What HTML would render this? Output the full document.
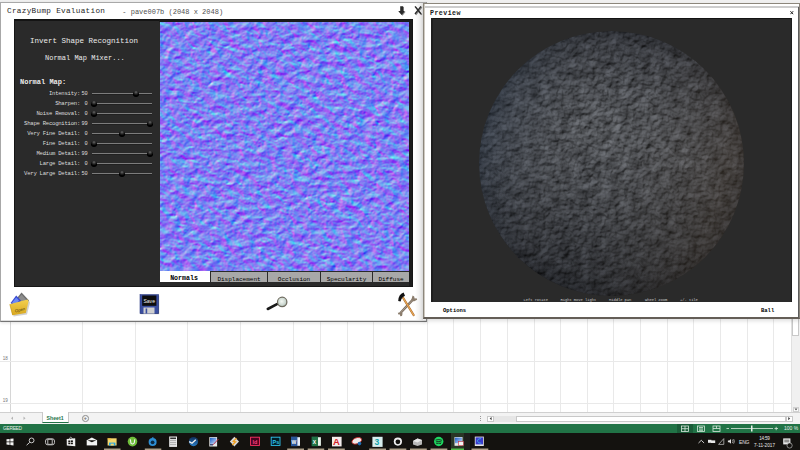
<!DOCTYPE html>
<html><head><meta charset="utf-8"><style>
*{margin:0;padding:0;box-sizing:border-box}
html,body{width:800px;height:450px;overflow:hidden;background:#fff;font-family:"Liberation Sans",sans-serif}
div{position:absolute}
.t{white-space:nowrap;line-height:1}
.mono{font-family:"Liberation Mono",monospace}
.vl{top:0;width:1px;height:413px;background:#e9e9e9}
.hl{left:0;height:1px;width:791px;background:#e9e9e9}
.lb{font-family:"Liberation Mono",monospace;font-size:5.6px;letter-spacing:-0.25px;color:#dcdcdc;white-space:nowrap;line-height:1;text-align:right;width:80px;left:0px}
.vv{font-family:"Liberation Mono",monospace;font-size:5.4px;letter-spacing:-0.2px;color:#dcdcdc;white-space:nowrap;line-height:1;text-align:right;width:20px;left:67.5px}
.tr{left:92px;width:60px;height:1px;background:#7c7c7c;box-shadow:0 1px 0 #202020}
.kn{width:5.4px;height:5.4px;border-radius:50%;background:radial-gradient(circle at 50% 20%,#666 0,#222 35%,#000 60%)}
#nmap{left:160px;top:22px;width:249px;height:249px;overflow:hidden}
#pdark{left:431px;top:18px;width:361px;height:284px;background:#2a2a2a;border-top:1px solid #141414;overflow:hidden}
.tab{top:272px;height:10px;background:#a8a8a8;font-family:"Liberation Mono",monospace;font-size:6px;line-height:10px;text-align:center;color:#000;white-space:nowrap;padding-top:3px}
</style></head><body>
<!-- excel -->
<div style="left:0;top:0;width:800px;height:413px;background:#fff">
<div class="vl" style="left:82px"></div><div class="vl" style="left:135px"></div><div class="vl" style="left:187px"></div><div class="vl" style="left:240px"></div><div class="vl" style="left:293px"></div><div class="vl" style="left:320px"></div><div class="vl" style="left:347px"></div><div class="vl" style="left:373px"></div><div class="vl" style="left:400px"></div><div class="vl" style="left:427px"></div><div class="vl" style="left:453px"></div><div class="vl" style="left:480px"></div><div class="vl" style="left:507px"></div><div class="vl" style="left:534px"></div><div class="vl" style="left:560px"></div><div class="vl" style="left:587px"></div><div class="vl" style="left:613px"></div><div class="vl" style="left:640px"></div><div class="vl" style="left:667px"></div><div class="vl" style="left:693px"></div><div class="vl" style="left:720px"></div><div class="vl" style="left:747px"></div><div class="vl" style="left:773px"></div><div class="vl" style="left:10px;background:#d6d6d6"></div><div class="hl" style="top:361px"></div><div class="hl" style="top:403px"></div>
<div style="left:0;top:0;width:800px;height:3px;background:#f0f0f0"></div>
<div class="t" style="left:2.8px;top:356.6px;font-size:4.6px;color:#777">18</div>
<div class="t" style="left:2.8px;top:398.6px;font-size:4.6px;color:#777">19</div>
<div style="left:791px;top:3px;width:9px;height:410px;background:#f0f0f0;border-left:1px solid #e0e0e0"></div>
<div style="left:792px;top:300px;width:7px;height:36px;background:#fff;border:1px solid #c8c8c8"></div>
<div style="left:793px;top:407px;width:6px;height:5px;background:#fff;border:1px solid #d0d0d0"></div>
</div>

<!-- main window -->
<div style="left:0;top:2px;width:427px;height:320px;background:#fff;border:1px solid #a8a8a8;border-bottom:1px solid #747474;border-right:1px solid #8a8a8a;box-shadow:0 1px 3px rgba(0,0,0,0.12)"></div>
<div style="left:1px;top:320px;width:425px;height:1px;background:#dedede"></div>
<div style="left:415px;top:3px;width:8px;height:317px;background:linear-gradient(90deg,rgba(0,0,0,0),rgba(0,0,0,0.1))"></div>
<div class="t mono" style="left:7px;top:8px;font-size:7.7px;letter-spacing:0.3px;color:#1e1e1e">CrazyBump Evaluation</div>
<div class="t mono" style="left:122.3px;top:8.5px;font-size:7px;color:#505050">- pave007b (2048 x 2048)</div>
<div style="left:14px;top:19px;width:399px;height:268px;background:#2a2a2a;border:1px solid #161616;border-top:2px solid #141414"></div>
<div style="left:409px;top:20px;width:3px;height:266px;background:#1c1c1c"></div>
<div style="left:159px;top:20px;width:251px;height:2px;background:#1a1a1a"></div>
<div id="nmap"><svg width="249" height="249" style="display:block">
<defs><filter id="nm" x="0" y="0" width="249" height="249" filterUnits="userSpaceOnUse" color-interpolation-filters="sRGB">
  <feTurbulence type="fractalNoise" baseFrequency="0.11 0.14" numOctaves="4" seed="7" result="t1"/>
  <feTurbulence type="turbulence" baseFrequency="0.06 0.08" numOctaves="3" seed="3" result="t2"/>
  <feComposite in="t1" in2="t2" operator="arithmetic" k1="0" k2="0.5" k3="0.6" k4="0" result="t"/>
  <feColorMatrix in="t" type="matrix" values="1 0 0 0 0  1 0 0 0 0  1 0 0 0 0  0 0 0 0 1" result="h"/>
  <feConvolveMatrix in="h" order="3" kernelMatrix="-1 0 1 -2 0 2 -1 0 1" divisor="2.7" bias="0.5" preserveAlpha="true" result="gx"/>
  <feConvolveMatrix in="h" order="3" kernelMatrix="-1 -2 -1 0 0 0 1 2 1" divisor="2.7" bias="0.5" preserveAlpha="true" result="gy"/>
  <feColorMatrix in="gx" type="matrix" values="1 0 0 0 0  0 0 0 0 0  0 0 0 0 0  0 0 0 0 1" result="r"/>
  <feColorMatrix in="gy" type="matrix" values="0 0 0 0 0  1 0 0 0 0  0 0 0 0 0  0 0 0 0 1" result="g"/>
  <feComposite in="r" in2="g" operator="arithmetic" k1="0" k2="1" k3="1" k4="0" result="rg"/>
  <feColorMatrix in="rg" type="matrix" values="1 0 0 0 0.0  0 1 0 0 0.0  0 0 0 0 0.95  0 0 0 0 1"/>
</filter></defs>
<rect x="0" y="0" width="249" height="249" filter="url(#nm)"/>
</svg></div>

<div class="t mono" style="left:30px;top:38px;font-size:7.5px;color:#eaeaea">Invert Shape Recognition</div>
<div class="t mono" style="left:45px;top:54.8px;font-size:7px;color:#eaeaea">Normal Map Mixer...</div>
<div class="t mono" style="left:20px;top:79px;font-size:7px;font-weight:bold;color:#eaeaea">Normal Map:</div>
<div class="lb" style="top:91.4px">Intensity:</div><div class="vv" style="top:91.5px">50</div><div class="tr" style="top:93px"></div><div class="kn" style="left:133.3px;top:91.3px"></div>
<div class="lb" style="top:101.4px">Sharpen:</div><div class="vv" style="top:101.5px">0</div><div class="tr" style="top:103px"></div><div class="kn" style="left:91.3px;top:101.3px"></div>
<div class="lb" style="top:111.4px">Noise Removal:</div><div class="vv" style="top:111.5px">0</div><div class="tr" style="top:113px"></div><div class="kn" style="left:91.3px;top:111.3px"></div>
<div class="lb" style="top:121.4px">Shape Recognition:</div><div class="vv" style="top:121.5px">99</div><div class="tr" style="top:123px"></div><div class="kn" style="left:147.3px;top:121.3px"></div>
<div class="lb" style="top:131.4px">Very Fine Detail:</div><div class="vv" style="top:131.5px">0</div><div class="tr" style="top:133px"></div><div class="kn" style="left:119.3px;top:131.3px"></div>
<div class="lb" style="top:141.4px">Fine Detail:</div><div class="vv" style="top:141.5px">0</div><div class="tr" style="top:143px"></div><div class="kn" style="left:91.3px;top:141.3px"></div>
<div class="lb" style="top:151.4px">Medium Detail:</div><div class="vv" style="top:151.5px">99</div><div class="tr" style="top:153px"></div><div class="kn" style="left:147.3px;top:151.3px"></div>
<div class="lb" style="top:161.4px">Large Detail:</div><div class="vv" style="top:161.5px">0</div><div class="tr" style="top:163px"></div><div class="kn" style="left:91.3px;top:161.3px"></div>
<div class="lb" style="top:171.4px">Very Large Detail:</div><div class="vv" style="top:171.5px">50</div><div class="tr" style="top:173px"></div><div class="kn" style="left:119.3px;top:171.3px"></div>

<div class="tab" style="left:160px;top:271px;width:50px;height:11px;background:#fff;padding-top:3px;padding-right:2px;color:#000;font-size:6.6px;font-weight:bold;letter-spacing:0px">Normals</div>
<div class="tab" style="left:211px;width:56px">Displacement</div>
<div class="tab" style="left:268px;width:52px">Occlusion</div>
<div class="tab" style="left:321px;width:51px">Specularity</div>
<div class="tab" style="left:373px;width:36px">Diffuse</div>

<!-- preview -->
<div style="left:423px;top:3px;width:377px;height:316px;background:#fff;border:1px solid #8c877c;border-bottom:2px solid #645e57;border-right:1px solid #8a857c;box-shadow:0 2px 4px rgba(0,0,0,0.13)"></div>
<div style="left:424px;top:6px;width:375px;height:1.5px;background:#cdcdcd"></div>
<div style="left:424px;top:4px;width:1px;height:313px;background:#cfcac2"></div>
<div class="t mono" style="left:430px;top:11px;font-size:6.6px;font-weight:bold;color:#222;letter-spacing:0.45px">Preview</div>
<svg style="position:absolute;left:0;top:0" width="800" height="40"><g filter="url(#blur03)"><path d="M790.4 11.2 L793.2 14.2 M793.2 11.2 L790.4 14.2" stroke="#222" stroke-width="1"/></g></svg>
<div id="pdark"><svg width="361" height="284" style="display:block">
<defs>
<radialGradient id="sg" cx="0.5" cy="0.5" r="0.5" fx="0.47" fy="0.36">
  <stop offset="0" stop-color="#6a6d72"/>
  <stop offset="0.5" stop-color="#5c5f65"/>
  <stop offset="0.88" stop-color="#4a4d54"/>
  <stop offset="1" stop-color="#3a3d44"/>
</radialGradient>
<linearGradient id="tint" x1="0" y1="0" x2="1" y2="0.3">
  <stop offset="0" stop-color="#5078a8" stop-opacity="0.2"/>
  <stop offset="0.5" stop-color="#808080" stop-opacity="0"/>
  <stop offset="1" stop-color="#a07848" stop-opacity="0.14"/>
</linearGradient>
<linearGradient id="bot" x1="0" y1="0" x2="0" y2="1">
  <stop offset="0.45" stop-color="#000" stop-opacity="0"/>
  <stop offset="1" stop-color="#000" stop-opacity="0.22"/>
</linearGradient>
<filter id="st" x="0" y="0" width="100%" height="100%" color-interpolation-filters="sRGB">
  <feTurbulence type="fractalNoise" baseFrequency="0.22" numOctaves="3" seed="12" result="t"/>
  <feColorMatrix in="t" type="matrix" values="0 0 0 0 0  0 0 0 0 0  0 0 0 0 0  1.5 0 0 0 -0.22" result="ta"/>
  <feDiffuseLighting in="ta" surfaceScale="1.5" diffuseConstant="0.9" lighting-color="#fff" result="l">
    <feDistantLight azimuth="240" elevation="55"/>
  </feDiffuseLighting>
  <feTurbulence type="fractalNoise" baseFrequency="0.1" numOctaves="2" seed="4" result="t2"/>
  <feColorMatrix in="t2" type="matrix" values="1.6 0 0 0 -0.3  1.6 0 0 0 -0.3  1.6 0 0 0 -0.3  0 0 0 0 1" result="hg"/>
  <feComposite in="l" in2="hg" operator="arithmetic" k1="0" k2="0.72" k3="0.4" k4="0" result="lh"/>
  <feComposite in="lh" in2="SourceGraphic" operator="arithmetic" k1="1.1" k2="0" k3="0" k4="0" result="m"/>
  <feComposite in="m" in2="SourceGraphic" operator="in"/>
</filter>
</defs>
<circle cx="180.5" cy="144.5" r="132.5" fill="url(#sg)" filter="url(#st)"/>
<circle cx="180.5" cy="144.5" r="132.5" fill="url(#tint)"/>
<circle cx="180.5" cy="144.5" r="132.5" fill="url(#bot)"/>
</svg></div>

<div style="left:431px;top:18px;width:2px;height:284px;background:#1e1e1e"></div>
<div style="left:790.5px;top:18px;width:1px;height:284px;background:#1e1e1e"></div>
<div style="left:798px;top:7px;width:1px;height:311px;background:#5c5c5c"></div>
<div class="t mono" style="left:443px;top:307.8px;font-size:5.5px;color:#000;font-weight:bold">Options</div>
<div class="t mono" style="left:761px;top:307.6px;font-size:5.5px;color:#000;font-weight:bold">Ball</div>


<svg style="position:absolute;left:0;top:0" width="800" height="450">
<defs>
<linearGradient id="fold" x1="0" y1="0" x2="0" y2="1"><stop offset="0" stop-color="#f4d050"/><stop offset="1" stop-color="#d8a820"/></linearGradient>
<radialGradient id="lens" cx="0.45" cy="0.45" r="0.6"><stop offset="0" stop-color="#f4f8f4"/><stop offset="0.7" stop-color="#c8d4cc"/><stop offset="1" stop-color="#8a948c"/></radialGradient>
<filter id="blur03"><feGaussianBlur stdDeviation="0.35"/></filter>
<filter id="sh"><feGaussianBlur stdDeviation="0.6"/></filter>
</defs>
<!-- title bar icons -->
<g filter="url(#sh)" opacity="0.45" transform="translate(0.8 0.8)">
<path d="M400.2 6.2 L403.2 6.2 L403.2 11 L404.9 11 L401.7 15 L398.2 11 L400.2 11Z" fill="#000"/>
<path d="M415 6.3 L421 14 M421 6.3 L415 14" stroke="#000" stroke-width="1.3"/>
</g>
<g filter="url(#blur03)">
<path d="M400.2 6.2 L403.2 6.2 L403.2 11 L404.9 11 L401.7 15 L398.2 11 L400.2 11Z" fill="#2a2a2a"/>
<path d="M415 6.3 L421 14 M421 6.3 L415 14" stroke="#2a2a2a" stroke-width="1.3"/>
</g>
<!-- open folder -->
<g>
<path d="M15.5 300 L21.5 292.6 L29 300.5 L23 306.5Z" fill="#6e6e6e"/>
<path d="M17 300 L21.6 294.6 L27 300.4 L22.6 304.6Z" fill="#9a9a9a" opacity="0.7"/>
<path d="M10.6 303 L16.2 295.6 L21 300.5 L15.5 307.5Z" fill="#3a4ad0"/>
<path d="M12 302.8 L16.2 297.6 L19 300.6 L15.2 305.2Z" fill="#6a8af8"/>
<path d="M10 304.5 L28 299.8 L29 301.6 L26 313.4 L12.6 315.6 L10.4 307Z" fill="#000" opacity="0.18" transform="translate(1 1)"/>
<path d="M9.6 304.2 L27.6 299.4 L28.6 301.2 L25.8 313 L12.4 315.2 L10.2 306.5Z" fill="url(#fold)"/>
<path d="M9.8 304.4 L12.6 315" stroke="#c09010" stroke-width="0.5"/>
<text x="14.5" y="311.5" font-family="Liberation Sans" font-size="4.2" font-style="italic" fill="#4a3608" transform="rotate(-15 19 309)">Open</text>
</g>
<!-- save floppy -->
<rect x="140.6" y="295.5" width="18.5" height="18.6" fill="#141414" filter="url(#sh)" opacity="0.5"/>
<rect x="140" y="294.6" width="18.6" height="19" fill="#3a4ea0"/>
<rect x="140" y="294.6" width="18.6" height="19" fill="none" stroke="#2a3a80" stroke-width="0.6"/>
<rect x="142.2" y="295.5" width="14.2" height="10.3" fill="#0c0c0c"/>
<text x="143.4" y="302.8" font-family="Liberation Sans" font-size="5.4" fill="#f0f0f0" textLength="11.6" lengthAdjust="spacingAndGlyphs">Save</text>
<rect x="143.5" y="307.5" width="11" height="6.1" fill="#cfcfcf"/>
<rect x="145.6" y="308.5" width="1.6" height="5" fill="#3a4ea0"/>
<!-- magnifier -->
<line x1="267.8" y1="309" x2="277" y2="304.2" stroke="#1a1a1a" stroke-width="2.6" stroke-linecap="round"/>
<circle cx="282.2" cy="301.9" r="4.7" fill="url(#lens)" stroke="#6e6a5e" stroke-width="1.2"/>
<!-- tools -->
<path d="M400.2 313.2 L413.8 298.6" stroke="#7a6c5e" stroke-width="2.4"/>
<path d="M400.2 313.2 L413.8 298.6" stroke="#b0a494" stroke-width="0.9"/>
<path d="M411.4 299.6 L412.6 295.6 L414.2 296.6 L414.6 298.4 L416.6 298.2 L417.2 299.8 L413.8 301.4Z" fill="#8a7c6c"/>
<path d="M401.6 312.4 L397.8 312.8 L398.4 314.6 L400 314.6 L400.2 316.2 L402 316 L402.6 313.6Z" fill="#8a7c6c"/>
<line x1="403.2" y1="298" x2="413.6" y2="315" stroke="#a86a2a" stroke-width="2.2" stroke-linecap="round"/>
<line x1="403.2" y1="298" x2="413.6" y2="315" stroke="#eaa858" stroke-width="1.2" stroke-linecap="round"/>
<path d="M398.2 301 Q398.4 294.6 403.6 292.6 L405 295.8 Q401.6 297.2 400.6 301.4Z" fill="#111"/>
<!-- excel vertical scroll arrow -->
<path d="M794.4 408.6 L797.6 408.6 L796 410.6Z" fill="#555"/>
</svg>
<div class="t mono" style="left:523.5px;top:299.2px;font-size:3.8px;color:#c8c8c8;letter-spacing:-0.05px">Left rotate</div>
<div class="t mono" style="left:560.5px;top:299.2px;font-size:3.8px;color:#c8c8c8;letter-spacing:-0.05px">Right move light</div>
<div class="t mono" style="left:609px;top:299.2px;font-size:3.8px;color:#c8c8c8;letter-spacing:-0.05px">Middle pan</div>
<div class="t mono" style="left:645px;top:299.2px;font-size:3.8px;color:#c8c8c8;letter-spacing:-0.05px">Wheel zoom</div>
<div class="t mono" style="left:680px;top:299.2px;font-size:3.8px;color:#c8c8c8;letter-spacing:-0.05px">+/- tile</div>

<!-- excel bottom -->
<div style="left:0;top:412px;width:800px;height:12px;background:#f3f3f3;border-top:1px solid #d0d0d0"></div>

<div style="left:41.5px;top:412px;width:27.5px;height:11.2px;background:#fff;border-left:1px solid #c8c8c8;border-right:1px solid #c8c8c8;border-bottom:1.4px solid #217346"></div>
<div class="t" style="left:46.6px;top:415.8px;font-size:5.2px;font-weight:bold;color:#217346">Sheet1</div>
<div style="left:82.2px;top:415px;width:6.6px;height:6.6px;border-radius:50%;border:1px solid #8a8a8a"></div>
<div class="t" style="left:83.4px;top:415.4px;font-size:6px;font-weight:bold;color:#777;line-height:1">+</div>
<div style="left:480px;top:416px;width:1px;height:1px;background:#999"></div>
<div style="left:480px;top:418px;width:1px;height:1px;background:#999"></div>
<div style="left:480px;top:420px;width:1px;height:1px;background:#999"></div>
<div style="left:487px;top:415.5px;width:298px;height:6px;background:#e6e6e6"></div>
<div style="left:487px;top:415.5px;width:7px;height:6px;background:#fff;border:1px solid #c8c8c8"></div>

<div style="left:516px;top:415.5px;width:270px;height:6px;background:#fff;border:1px solid #c8c8c8"></div>
<div style="left:785.5px;top:415.5px;width:7px;height:6px;background:#fff;border:1px solid #c8c8c8"></div>

<svg style="position:absolute;left:0;top:0" width="800" height="450">
<path d="M13 416.5 L11 418.3 L13 420.1Z" fill="#b4b4b4"/>
<path d="M23.5 416.5 L25.5 418.3 L23.5 420.1Z" fill="#b4b4b4"/>
<path d="M491.6 416.9 L489.6 418.6 L491.6 420.3Z" fill="#444"/>
<path d="M788.2 416.9 L790.2 418.6 L788.2 420.3Z" fill="#444"/>
</svg>
<div style="left:0;top:424px;width:800px;height:9px;background:#217346"></div>
<div class="t" style="left:3px;top:427px;font-size:4.8px;color:#e8f0ea;letter-spacing:-0.25px">GEREED</div>
<div style="left:677px;top:424px;width:16px;height:9px;background:#1a5c38"></div>
<svg style="position:absolute;left:0;top:0" width="800" height="450">
 <g stroke="#d8e8dc" stroke-width="0.8" fill="none">
  <rect x="681.5" y="426" width="7" height="5.5"/><line x1="681.5" y1="428.7" x2="688.5" y2="428.7"/><line x1="685" y1="426" x2="685" y2="431.5"/>
  <rect x="697.5" y="426" width="7" height="5.5"/><line x1="699" y1="427.5" x2="703" y2="427.5"/><line x1="699" y1="429" x2="703" y2="429"/><line x1="699" y1="430.3" x2="703" y2="430.3"/>
  <rect x="713" y="426" width="7" height="5.5"/><line x1="716.5" y1="426" x2="716.5" y2="428.5"/><line x1="713" y1="428.5" x2="720" y2="428.5"/>
  <line x1="726.5" y1="428.5" x2="729" y2="428.5"/>
  <line x1="731" y1="428.5" x2="773" y2="428.5"/>
  <line x1="774.5" y1="428.5" x2="778" y2="428.5"/><line x1="776.2" y1="426.8" x2="776.2" y2="430.2"/>
 </g>
 <rect x="751" y="425.5" width="1.5" height="6" fill="#e8f0ea"/>
</svg>
<div class="t" style="left:784px;top:426px;font-size:5px;color:#e8f0ea">100 %</div>
<svg style="position:absolute;left:0;top:0" width="800" height="450">
<rect x="0" y="433" width="800" height="17" fill="#14120f"/>
<!-- running indicators -->
<g fill="#c9b9a0" opacity="0.85">
<rect x="104" y="448.5" width="16.5" height="1.5"/>
<rect x="144.8" y="448.5" width="16.5" height="1.5"/>
<rect x="287.2" y="448.5" width="16.8" height="1.5"/>
<rect x="307.7" y="448.5" width="16.5" height="1.5"/>
<rect x="328" y="448.5" width="16.8" height="1.5"/>
<rect x="369.2" y="448.5" width="16.8" height="1.5"/>
<rect x="389.5" y="448.5" width="16.8" height="1.5"/>
<rect x="410" y="448.5" width="16.8" height="1.5"/>
<rect x="430.5" y="448.5" width="16.8" height="1.5"/>
<rect x="471.5" y="448.5" width="16.8" height="1.5"/>
</g>
<rect x="451" y="433" width="13" height="17" fill="#2a3626"/>
<rect x="464" y="433" width="6" height="17" fill="#1e1e1c"/>
<rect x="451" y="448.5" width="13" height="1.5" fill="#52c04a"/>
<!-- windows logo -->
<g fill="#f4f4f4">
<path d="M6.5 439.3 L9.6 438.9 L9.6 441.6 L6.5 441.6Z"/>
<path d="M10.3 438.8 L13.5 438.4 L13.5 441.6 L10.3 441.6Z"/>
<path d="M6.5 442.3 L9.6 442.3 L9.6 445 L6.5 444.6Z"/>
<path d="M10.3 442.3 L13.5 442.3 L13.5 445.5 L10.3 445.1Z"/>
</g>
<!-- search -->
<g stroke="#dcdcdc" stroke-width="0.9" fill="none">
<circle cx="31.6" cy="440.4" r="2.4"/>
<line x1="29.8" y1="442.3" x2="26.6" y2="445.2"/>
</g>
<!-- task view -->
<g stroke="#cfcfcf" stroke-width="0.9" fill="none">
<rect x="45.5" y="438.8" width="9" height="6" rx="2.2"/>
<rect x="47.8" y="439.3" width="4.4" height="5" fill="#14120f"/>
</g>
<!-- store -->
<path d="M66.7 439 L75.2 438.3 L75.3 446.3 L66.8 445.5Z" fill="#f0f0f0"/>
<path d="M69 438.8 Q70.5 435.8 72.5 438.5" stroke="#e0e0e0" stroke-width="0.8" fill="none"/>
<g fill="#14120f"><rect x="68.3" y="440.5" width="2" height="1.6"/><rect x="70.9" y="440.4" width="2" height="1.6"/><rect x="68.3" y="442.6" width="2" height="1.6"/><rect x="70.9" y="442.6" width="2" height="1.6"/></g>
<!-- mail -->
<rect x="86.7" y="440" width="10.4" height="5.4" fill="#f2f2f2"/>
<path d="M86.7 440.2 L91.9 437.4 L97.1 440.2Z" fill="#f2f2f2"/>
<path d="M87.5 440.2 L91.9 442.3 L96.4 440.2Z" fill="#14120f"/>
<!-- explorer -->
<rect x="107.6" y="438.3" width="9" height="7.2" fill="#f6d870"/>
<rect x="107.6" y="438.3" width="3.5" height="1.2" fill="#e8b83a"/>
<rect x="109" y="442.6" width="6.4" height="2.9" fill="#2aa6e0"/>
<rect x="110.6" y="443.6" width="3.2" height="1.9" fill="#f6d870"/>
<!-- utorrent -->
<circle cx="132.5" cy="441.6" r="4.8" fill="#6fbf3a"/>
<path d="M130.3 439.4 L131 443.4 Q132.8 444.8 134.2 443 L134.8 439.4" stroke="#f2f2f2" stroke-width="1.1" fill="none"/>
<!-- blue circle app -->
<circle cx="152.6" cy="442" r="4" fill="#2d8ed4"/>
<circle cx="152.6" cy="442.3" r="1.9" fill="#0c2a44"/>
<path d="M151.4 438.3 L153.2 436.8 L153.6 438.6Z" fill="#2d8ed4"/>
<!-- calculator -->
<rect x="169.2" y="436.5" width="7.8" height="10.4" fill="#eeeeee"/>
<rect x="170.2" y="437.5" width="5.8" height="1.6" fill="#333"/>
<g fill="#777"><rect x="170" y="440.5" width="6.2" height="0.6"/><rect x="170" y="442.5" width="6.2" height="0.6"/><rect x="170" y="444.5" width="6.2" height="0.6"/></g>
<!-- steam -->
<defs><linearGradient id="stg" x1="0" y1="0" x2="0" y2="1"><stop offset="0" stop-color="#0f2d5a"/><stop offset="1" stop-color="#2a7fc8"/></linearGradient>
<linearGradient id="mong" x1="0" y1="0" x2="1" y2="1"><stop offset="0" stop-color="#1e5ec8"/><stop offset="1" stop-color="#c8dcf8"/></linearGradient></defs>
<circle cx="193.5" cy="441.6" r="4.6" fill="url(#stg)"/>
<path d="M189.2 441.6 L192 443.3 L195.8 439.8" stroke="#f0f0f0" stroke-width="1.3" fill="none"/>
<!-- monitor w pen -->
<rect x="209.3" y="437.1" width="7.8" height="9.4" fill="#e8e8e8"/>
<rect x="210" y="437.8" width="6.4" height="6" fill="url(#mong)"/>
<rect x="210" y="444.2" width="3" height="1.2" fill="#1a2a60"/>
<line x1="213" y1="444.8" x2="218.5" y2="439" stroke="#c0203a" stroke-width="0.9"/>
<!-- winamp -->
<path d="M234.4 436.8 L239 441.6 L234.4 446.4 L229.8 441.6Z" fill="#d8d8d8"/>
<path d="M236.5 438.2 L233.3 441.4 L235.6 441.8 L232.2 445" stroke="#f0a020" stroke-width="1.3" fill="none"/>
<!-- InDesign -->
<rect x="250.6" y="437.2" width="8.8" height="8.2" fill="#49021f" stroke="#ff3366" stroke-width="0.9"/>
<text x="252.6" y="443.8" font-family="Liberation Sans" font-size="5.5" font-weight="bold" fill="#ff3f7f">Id</text>
<!-- Ps -->
<rect x="271.2" y="437.2" width="8.8" height="8.2" fill="#001d26" stroke="#31c5f0" stroke-width="0.9"/>
<text x="272.6" y="443.8" font-family="Liberation Sans" font-size="5.5" font-weight="bold" fill="#31c5f0">Ps</text>
<!-- Word -->
<rect x="294" y="437.2" width="6" height="8.6" fill="#e8eef8"/>
<rect x="291" y="436.6" width="6.4" height="9.6" fill="#2b579a"/>
<text x="291.5" y="443.8" font-family="Liberation Sans" font-size="5" font-weight="bold" fill="#fff">W</text>
<!-- Excel -->
<rect x="314.5" y="437.2" width="6.4" height="8.6" fill="#e8f4ec"/>
<rect x="311.6" y="436.6" width="6.4" height="9.6" fill="#217346"/>
<text x="312.7" y="443.8" font-family="Liberation Sans" font-size="5" font-weight="bold" fill="#fff">X</text>
<!-- Acrobat -->
<rect x="332" y="436.8" width="9.6" height="9.6" fill="#f4ecec"/>
<text x="332.9" y="445.4" font-family="Liberation Sans" font-size="9.5" font-weight="bold" fill="#d32027">A</text>
<!-- eraser-ish -->
<ellipse cx="356.8" cy="440.8" rx="5" ry="3" transform="rotate(-20 356.8 440.8)" fill="#f0e8e8" stroke="#d03030" stroke-width="0.8"/>
<circle cx="359.5" cy="443.6" r="1.8" fill="#1a6ab0"/>
<!-- 3ds -->
<rect x="372.4" y="436.8" width="10.2" height="10.1" fill="#d8eeee"/>
<text x="374.6" y="445" font-family="Liberation Sans" font-size="8.5" font-weight="bold" fill="#12a3a8">3</text>
<!-- github -->
<circle cx="397.9" cy="441.6" r="4.1" fill="#f0f0f0"/>
<circle cx="397.9" cy="441.8" r="2.4" fill="#14120f"/>
<!-- network drive -->
<path d="M413 441 L417.5 438.5 L422 440 L422 444.5 L417.5 446 L413 444.5Z" fill="#b8b8b8"/>
<path d="M413 441 L417.5 438.5 L422 440 L417.5 442.5Z" fill="#e8e8e8"/>
<!-- spotify -->
<circle cx="438.7" cy="441.5" r="4.7" fill="#1ed760"/>
<g stroke="#14120f" stroke-width="0.8" fill="none"><path d="M435.6 440.1 Q438.8 438.9 441.9 440.3"/><path d="M435.9 441.9 Q438.8 440.9 441.5 442"/><path d="M436.3 443.5 Q438.7 442.8 441 443.6"/></g>
<!-- active crazybump -->
<rect x="454.5" y="437" width="8" height="8.8" fill="#e8e8e8"/>
<rect x="455" y="437.6" width="7" height="5.6" fill="url(#mong)"/>
<rect x="458.5" y="441.5" width="5" height="4" fill="#f4f4f4" stroke="#c03040" stroke-width="0.6"/>
<!-- blue screen -->
<rect x="474.8" y="436.6" width="9" height="9.4" fill="#e4e4e4"/>
<rect x="475.6" y="437.4" width="7.4" height="7" fill="#3a3ad0"/>
<path d="M481 438.6 Q477.2 438.8 477.5 441.2 Q477.8 443.4 481.3 443.2" stroke="#40d0e8" stroke-width="0.7" fill="none"/>
<!-- systray -->
<path d="M698.5 443 L701.3 440.3 L704.1 443" stroke="#e0e0e0" stroke-width="0.9" fill="none"/>
<rect x="708" y="439.8" width="3.4" height="3" fill="#e8e8e8"/>
<rect x="711" y="440.4" width="4.2" height="2.6" fill="#e8e8e8"/>
<path d="M718.6 444.4 L723.8 438.6 L723.8 444.4Z" fill="none" stroke="#cfcfcf" stroke-width="0.7"/>
<path d="M727.9 440.4 L729.3 440.4 L731 438.9 L731 443.8 L729.3 442.3 L727.9 442.3Z" fill="#e4e4e4"/>
<path d="M732.4 439.6 Q733.6 441.35 732.4 443.1 M733.6 439 Q735.2 441.35 733.6 443.7" stroke="#e4e4e4" stroke-width="0.6" fill="none"/>
<text x="739" y="444.3" font-family="Liberation Sans" font-size="5" fill="#e0e0e0" letter-spacing="-0.2">ENG</text>
<text x="759.3" y="439.7" font-family="Liberation Sans" font-size="4.6" fill="#e8e8e8" textLength="10.5">14:59</text>
<text x="754" y="446.9" font-family="Liberation Sans" font-size="4.6" fill="#e8e8e8" textLength="21">7-11-2017</text>
<rect x="783.2" y="438.4" width="7.2" height="6" fill="#e8e8e8"/>
<g stroke="#14120f" stroke-width="0.6"><line x1="784.3" y1="440.2" x2="789.3" y2="440.2"/><line x1="784.3" y1="441.8" x2="789.3" y2="441.8"/></g>
<circle cx="789.6" cy="445.5" r="2.6" fill="#14120f" stroke="#d0d0d0" stroke-width="0.6"/>
</svg>

</body></html>
